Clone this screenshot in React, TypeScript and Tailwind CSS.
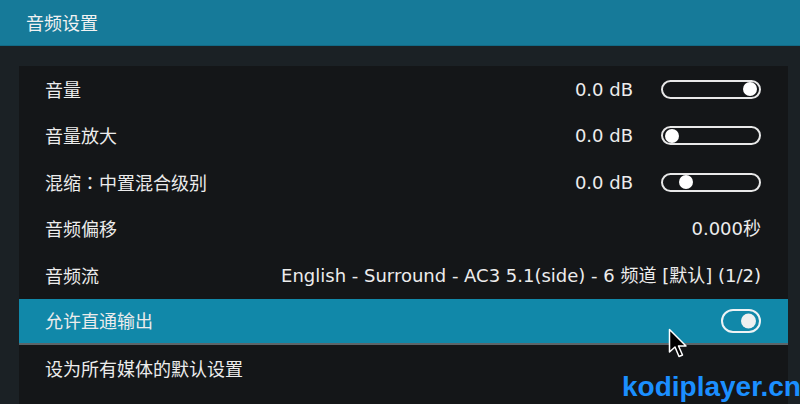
import React from 'react';

const font = { fontFamily: '"DejaVu Sans", "Noto Sans CJK SC", sans-serif' };
const cjk = { fontFamily: '"Noto Sans CJK SC", "DejaVu Sans", sans-serif' };

function Slider({ pos }: { pos: number }) {
    return (
        <div className="relative w-[100px] h-[19px] rounded-full border-2 border-[#e8e8e8]">
            <div
                className="absolute top-1/2 -translate-y-1/2 w-[14px] h-[14px] rounded-full bg-white"
                style={{ left: pos }}
            />
        </div>
    );
}

function Toggle() {
    return (
        <div className="relative w-[40px] h-[24px] rounded-full border-2 border-[#eef3f5]">
            <div className="absolute top-1/2 -translate-y-1/2 right-[3px] w-[15px] h-[15px] rounded-full bg-[#eef0f0]" />
        </div>
    );
}

type Row = { label: string; value?: string; slider?: number; toggle?: boolean; active?: boolean };

const rows: Row[] = [
    { label: '音量', value: '0.0 dB', slider: 80 },
    { label: '音量放大', value: '0.0 dB', slider: 2 },
    { label: '混缩：中置混合级别', value: '0.0 dB', slider: 16 },
    { label: '音频偏移', value: '0.000秒' },
    { label: '音频流', value: 'English - Surround - AC3 5.1(side) - 6 频道 [默认] (1/2)' },
    { label: '允许直通输出', toggle: true, active: true },
    { label: '设为所有媒体的默认设置' },
];

// full-width colon is centred in the reference, so take it from the JP face
function Label({ text }: { text: string }) {
    const parts = text.split('：');
    return (
        <span className="flex-1" style={cjk}>
            {parts.map((p, i) => (
                <React.Fragment key={i}>
                    {i > 0 && <span style={{ fontFamily: '"Noto Sans CJK JP", sans-serif' }}>：</span>}
                    {p}
                </React.Fragment>
            ))}
        </span>
    );
}

function App() {
    return (
        <div className="relative w-[800px] h-[404px] overflow-hidden bg-[#1b2125] text-[#ececec]" style={font}>
            <header className="h-[46px] bg-[#167a99] border-b border-[#126a86] flex items-center pl-[26px]">
                <h1 className="text-[18px] text-[#f2f2f2]" style={cjk}>音频设置</h1>
            </header>
            <div className="ml-[19px] mr-[12px] mt-[20px] bg-[#141618] h-[400px]">
                {rows.map((r) => (
                    <div
                        key={r.label}
                        className={
                            'h-[46.5px] flex items-center pl-[26px] pr-[27px] text-[18px] ' +
                            (r.active ? 'bg-[#1188a9] border-b-2 border-[#5d6468]' : '')
                        }
                    >
                        <Label text={r.label} />
                        {r.value && <span className="whitespace-nowrap">{r.value}</span>}
                        {r.slider !== undefined && (
                            <div className="ml-[28px]">
                                <Slider pos={r.slider} />
                            </div>
                        )}
                        {r.toggle && <Toggle />}
                    </div>
                ))}
            </div>

            {/* mouse cursor */}
            <svg className="absolute left-[668px] top-[328px]" width="22" height="32" viewBox="0 0 22 32">
                <path d="M1.5 1.5 L1.5 24 L7 19 L11 28.5 L14.5 27 L10.5 18 L18 18 Z" fill="#000" stroke="#fff" strokeWidth="1.5" strokeLinejoin="round" />
            </svg>

            {/* watermark */}
            <div
                className="absolute left-[622px] top-[373px] text-[28px] font-bold text-[#1b8fff] leading-none"
                style={{ fontFamily: '"Liberation Sans", Arial, sans-serif' }}
            >
                kodiplayer.cn
            </div>
        </div>
    );
}

export default App;
